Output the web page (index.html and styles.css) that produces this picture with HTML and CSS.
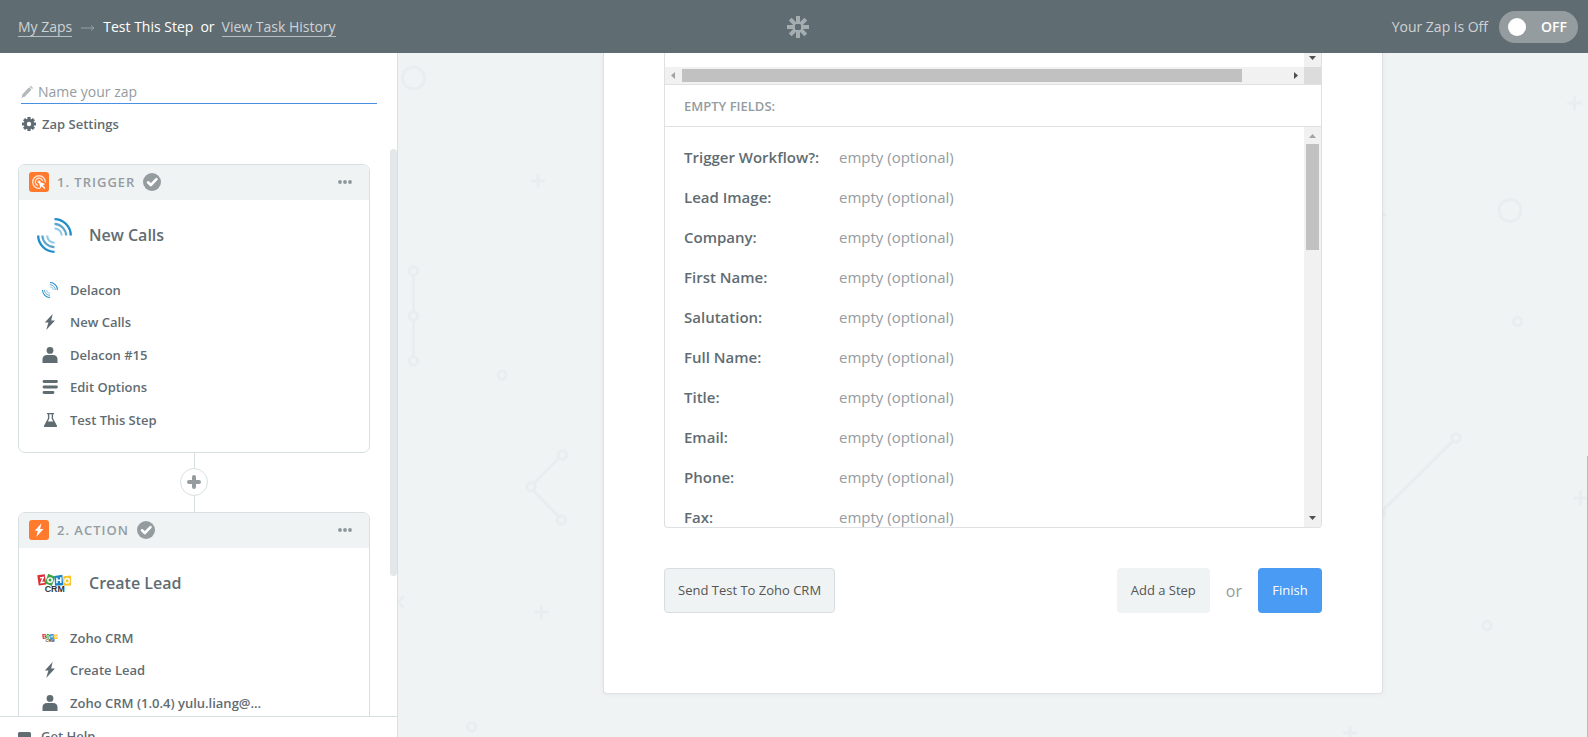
FILE: index.html
```html
<!DOCTYPE html>
<html lang="en">
<head>
<meta charset="utf-8">
<title>Test This Step</title>
<link rel="stylesheet" href="styles.css">
</head>
<body>
<svg class="defs" aria-hidden="true">
  <symbol id="bolt" viewBox="0 0 16 16"><path d="M10.6 0 2.8 8.6h3.6L4.2 16 13 6.6H9.2z" fill="currentColor"/></symbol>
  <symbol id="person" viewBox="0 0 16 16"><circle cx="8" cy="3.4" r="3.4" fill="currentColor"/><path d="M.5 16v-3.5Q.5 8 5 8h6q4.500 0 4.500 4.500V16z" fill="currentColor"/></symbol>
  <symbol id="waves" viewBox="0 0 36 36">
    <g fill="none">
      <path d="M18 1.200A17 17 0 0 1 34.800 18" stroke="#1f8ccb" stroke-width="2.400"/>
      <path d="M18 6A12.500 12.500 0 0 1 30 18" stroke="#5fa5cb" stroke-width="2.200"/>
      <path d="M18 10.800A7.500 7.500 0 0 1 25.500 18" stroke="#92cbea" stroke-width="2.200"/>
      <path d="M1.200 18A17 17 0 0 0 18 34.800" stroke="#1f8ccb" stroke-width="2.400"/>
      <path d="M5.500 18A12.500 12.500 0 0 0 18 30" stroke="#5fa5cb" stroke-width="2.200"/>
      <path d="M10.500 18A7.500 7.500 0 0 0 18 25.500" stroke="#92cbea" stroke-width="2.200"/>
    </g>
  </symbol>
  <symbol id="zoho" viewBox="0 0 36 20">
    <path d="M.3 1.600 8 .4l1.500 10.500L1.800 12z" fill="#dc2f34"/>
    <path d="m11.500 0 7.300 3-3.600 9.500-7-2.800z" fill="#3fa447"/>
    <path d="m18 2.300 8-1.300 1 10.800-8.500.4z" fill="#1c83c6"/>
    <path d="M27 2.500 35 1.800V12l-8 .4z" fill="#fbc52c"/>
    <g fill="none" stroke="#fff" stroke-width="1.500">
      <path d="m3 4.200 3.400-.5-2.200 5.500 3.600-.5"/><circle cx="13.400" cy="6.500" r="2.300"/><path d="M20.500 4v5.800m4-6.200v6m-4-3h4"/><circle cx="31" cy="7.200" r="2.300"/>
    </g>
  </symbol>
  <symbol id="check" viewBox="0 0 18 18"><circle cx="9" cy="9" r="9" fill="#959c9f"/><path d="m5 9.300 2.800 2.700L13.500 6.200" fill="none" stroke="#fff" stroke-width="2.600" stroke-linecap="round" stroke-linejoin="round"/></symbol>
  <symbol id="dots" viewBox="0 0 14 4"><g fill="#8f979b"><circle cx="2" cy="2" r="1.900"/><circle cx="7" cy="2" r="1.900"/><circle cx="12" cy="2" r="1.900"/></g></symbol>
</svg>

<header class="topbar">
  <nav class="crumbs">
    <a href="#">My Zaps</a>
    <svg class="crumb-arrow" viewBox="0 0 14 8"><path d="M0 4h13M10 1.500 13 4l-3 2.500" fill="none" stroke="#99a2a5"/></svg>
    <span class="current">Test This Step</span>
    <span class="crumb-or">or</span>
    <a href="#">View Task History</a>
  </nav>
  <svg class="logo" viewBox="-11 -11 22 22"><g stroke="#a5adb0" stroke-width="4"><path d="M0-11v8M0 3v8M-11 0h8M3 0h8M-7.800-7.800l5.300 5.300M2.500 2.500l5.300 5.300M-7.800 7.800l5.300-5.300M2.500-2.500l5.300-5.300"/></g></svg>
  <div class="status">
    <span>Your Zap is Off</span>
    <button class="toggle" type="button" role="switch" aria-checked="false"><span class="knob"></span>OFF</button>
  </div>
</header>

<div class="workspace">
  <aside class="sidebar">
    <div class="sidebar-body">
      <div class="name-field">
        <svg class="pencil" viewBox="0 0 12 12"><path d="m.5 11.800.8-3.300L8 1.200 10.500 3.500 3.800 10.800zM8.600.6l.4-.4q.6-.4 1.200 0l1.400 1.300q.5.500 0 1.100l-.5.500z" fill="#b3b9bb"/></svg>
        <input id="zap-name" type="text" aria-label="Name your zap" placeholder="Name your zap">
      </div>
      <button class="settings" type="button">
        <svg viewBox="-7 -7 14 14"><g stroke="#5f6c72" stroke-width="3.200"><path d="M0-7V7M-7 0H7M-4.900-4.900l9.800 9.800M-4.900 4.900l9.800-9.800"/></g><circle r="3.700" fill="none" stroke="#5f6c72" stroke-width="3"/><circle r="2.200" fill="#fff"/></svg>
        Zap Settings
      </button>

      <section class="step">
        <div class="step-head">
          <svg class="badge" viewBox="0 0 20 20"><rect width="20" height="20" rx="3" fill="#ff7a2d"/><g fill="none" stroke="#ffe0cd" stroke-width="1.400"><path d="M11 16.300A6.300 6.300 0 1 1 16.300 10.500"/><path d="M9 13.500A3.700 3.700 0 1 1 13.600 9"/></g><circle cx="10" cy="9.800" r="1.500" fill="#ffe0cd"/><path d="m9.600 9.400 6.600 2.500-2.400 1.300 2.600 2.700-1.100 1.100-2.600-2.700-1.200 2.300z" fill="#fff"/></svg>
          <h2>1. Trigger</h2>
          <svg class="check"><use href="#check"/></svg>
          <button class="more" type="button" aria-label="More"><svg><use href="#dots"/></svg></button>
        </div>
        <div class="step-title"><svg class="app-logo"><use href="#waves"/></svg><h3>New Calls</h3></div>
        <ul class="step-list">
          <li><svg><use href="#waves"/></svg><a href="#">Delacon</a></li>
          <li><svg><use href="#bolt"/></svg><a href="#">New Calls</a></li>
          <li><svg><use href="#person"/></svg><a href="#">Delacon #15</a></li>
          <li><svg viewBox="0 0 16 16"><path d="M2 2.500h12.500M2 8h12.500M2 13.500h9" stroke="currentColor" stroke-width="2.800" stroke-linecap="round"/></svg><a href="#">Edit Options</a></li>
          <li><svg viewBox="0 0 16 16"><path d="M5 1h7v1.200h-.9v4.300l3.900 7.300q.5 1.200-.8 1.200H2.800q-1.300 0-.8-1.200l3.900-7.300V2.200H5zm2.300 1.200v4.600L5.800 9.500h5.400L9.700 6.800V2.200z" fill="currentColor"/></svg><a href="#">Test This Step</a></li>
        </ul>
      </section>

      <div class="connector">
        <button type="button" aria-label="Add step"><svg viewBox="0 0 14 14"><path d="M7 2v10M2 7h10" stroke="#959c9f" stroke-width="4" stroke-linecap="round"/></svg></button>
      </div>

      <section class="step">
        <div class="step-head">
          <svg class="badge" viewBox="0 0 20 20"><rect width="20" height="20" rx="3" fill="#ff7a2d"/><path d="m12.500 3.300-6.800 7.500h3.100L7.300 17l7.100-8h-3.300z" fill="#fff"/></svg>
          <h2>2. Action</h2>
          <svg class="check"><use href="#check"/></svg>
          <button class="more" type="button" aria-label="More"><svg><use href="#dots"/></svg></button>
        </div>
        <div class="step-title"><svg class="app-logo" viewBox="0 0 36 20"><use href="#zoho" width="36" height="20"/><text x="8" y="19" class="zoho-text">CRM</text></svg><h3>Create Lead</h3></div>
        <ul class="step-list">
          <li><svg viewBox="0 0 36 20"><use href="#zoho" width="36" height="20"/><text x="8" y="19" class="zoho-text">CRM</text></svg><a href="#">Zoho CRM</a></li>
          <li><svg><use href="#bolt"/></svg><a href="#">Create Lead</a></li>
          <li><svg><use href="#person"/></svg><a href="#">Zoho CRM (1.0.4) yulu.liang@...</a></li>
        </ul>
      </section>
      <div class="side-thumb"></div>
    </div>
    <footer class="help">
      <svg viewBox="0 0 13 13"><path d="M1.500 0h10Q13 0 13 1.500v7q0 1.500-1.500 1.500H7l-3 3v-3H1.500Q0 10 0 8.500v-7Q0 0 1.500 0z" fill="#5f6c72"/></svg>
      <a href="#">Get Help</a>
    </footer>
  </aside>

  <main class="stage">
    <svg class="pattern" viewBox="398 53 1190 684" aria-hidden="true">
      <g fill="none" stroke="#e8edef" stroke-width="3" stroke-linecap="round">
        <circle cx="413.500" cy="78" r="11"/><circle cx="1510" cy="210.500" r="11"/>
        <path d="M538 175v12M532 181h12M541.500 606v12M535.500 612h12M1574.500 97v12M1568.500 103h12M1580.500 492v12M1574.500 498h12M1350 727v12M1344 733h12M1380 215h5"/>
        <circle cx="413.500" cy="271" r="4.200"/><circle cx="413.500" cy="316" r="4.200"/><circle cx="413.500" cy="361" r="4.200"/>
        <path d="M413.500 276v35M413.500 321v35"/>
        <circle cx="502" cy="375" r="4.200"/><circle cx="562.500" cy="455" r="4.200"/><circle cx="531" cy="487" r="4.200"/><circle cx="561.500" cy="520" r="4.200"/>
        <path d="m559 458-25 25M534 491l24 25M403 597l-5 5 5 5"/>
        <circle cx="471.500" cy="727" r="4.200"/><circle cx="1517.500" cy="321.500" r="4.200"/><circle cx="1487" cy="625.500" r="4.200"/>
        <circle cx="1456" cy="438" r="4.200"/><circle cx="1380" cy="514" r="4.200"/><path d="m1453 441-71 70"/>
      </g>
    </svg>
    <div class="card">
      <div class="panel">
        <div class="sample">
          <div class="sample-body"></div>
          <div class="scroll-y"><svg class="arrow" viewBox="0 0 7 4"><path d="M0 0h7L3.500 4z" fill="#505050"/></svg></div>
          <div class="scroll-x">
            <svg class="arrow-side" viewBox="0 0 4 7"><path d="M4 0v7L0 3.500z" fill="#a3a3a3"/></svg>
            <div class="track-x"><div class="thumb-x"></div></div>
            <svg class="arrow-side" viewBox="0 0 4 7"><path d="M0 0v7l4-3.500z" fill="#505050"/></svg>
          </div>
          <div class="corner"></div>
        </div>
        <h4 class="panel-title">Empty Fields:</h4>
        <div class="fields">
          <dl class="field-list">
            <dt>Trigger Workflow?:</dt><dd>empty (optional)</dd>
            <dt>Lead Image:</dt><dd>empty (optional)</dd>
            <dt>Company:</dt><dd>empty (optional)</dd>
            <dt>First Name:</dt><dd>empty (optional)</dd>
            <dt>Salutation:</dt><dd>empty (optional)</dd>
            <dt>Full Name:</dt><dd>empty (optional)</dd>
            <dt>Title:</dt><dd>empty (optional)</dd>
            <dt>Email:</dt><dd>empty (optional)</dd>
            <dt>Phone:</dt><dd>empty (optional)</dd>
            <dt>Fax:</dt><dd>empty (optional)</dd>
          </dl>
          <div class="scroll-y scroll-fields">
            <svg class="arrow" viewBox="0 0 7 4"><path d="M0 4h7L3.500 0z" fill="#a3a3a3"/></svg>
            <div class="thumb-y"></div>
            <svg class="arrow arrow-end" viewBox="0 0 7 4"><path d="M0 0h7L3.500 4z" fill="#505050"/></svg>
          </div>
        </div>
      </div>
      <div class="actions">
        <button class="btn btn-outline" type="button">Send Test To Zoho CRM</button>
        <button class="btn btn-plain" type="button">Add a Step</button>
        <span class="or">or</span>
        <button class="btn btn-primary" type="button">Finish</button>
      </div>
    </div>
    <div class="page-thumb"></div>
  </main>
</div>
</body>
</html>
```
FILE: styles.css
```css
* { box-sizing: border-box; }
body {
  margin: 0;
  height: 100vh;
  display: flex;
  flex-direction: column;
  overflow: hidden;
  font: 400 14px/20px "Open Sans", "Noto Sans", sans-serif;
  color: #5f6c72;
}
button { font: inherit; color: inherit; border: 0; padding: 0; background: none; cursor: pointer; }
a { color: inherit; text-decoration: none; }
h2, h3, h4, ul, dl, dd { margin: 0; padding: 0; }
svg { display: block; flex: none; }
.defs { position: absolute; width: 0; height: 0; }
.zoho-text { font: 700 9px "Liberation Sans", sans-serif; fill: #333; }

/* Top bar */
.topbar {
  flex: none;
  height: 53px;
  padding: 0 10px 0 18px;
  display: grid;
  grid-template-columns: 1fr auto 1fr;
  align-items: center;
  background: #5f6c72;
}
.crumbs { display: flex; align-items: center; }
.crumbs a { margin-top: 1px; color: #cfd3d5; border-bottom: 1px solid #b7bdc0; line-height: 18px; }
.crumb-arrow { width: 14px; height: 8px; margin: 2px 8px 0 9px; }
.current, .crumb-or { color: #fff; }
.crumb-or { margin: 0 7px; }
.logo { width: 22px; height: 22px; }
.status { display: flex; justify-content: flex-end; align-items: center; gap: 11px; color: #cfd3d5; }
.toggle {
  display: flex;
  align-items: center;
  justify-content: space-between;
  width: 79px;
  height: 32px;
  padding: 0 11px 0 9px;
  border-radius: 16px;
  background: #959c9f;
  color: #fff;
  font-weight: 600;
}
.knob { width: 18px; height: 18px; border-radius: 50%; background: #fff; }

.workspace { flex: 1; min-height: 0; display: grid; grid-template-columns: 398px 1fr; }

/* Sidebar */
.sidebar {
  min-height: 0;
  display: flex;
  flex-direction: column;
  border-right: 1px solid #dcdfe1;
  background: #fff;
  font-size: 13px;
  font-weight: 600;
}
.sidebar-body { position: relative; flex: 1; min-height: 0; overflow: hidden; padding: 27px 27px 0 18px; }
.name-field {
  display: flex;
  align-items: center;
  gap: 5px;
  height: 24px;
  margin: 0 -7px 0 3px;
  border-bottom: 1px solid #4a90e2;
}
.pencil { width: 12px; height: 12px; }
.name-field input {
  flex: 1;
  min-width: 0;
  padding: 0;
  border: 0;
  outline: 0;
  background: none;
  font: 400 14px/20px "Open Sans", "Noto Sans", sans-serif;
  color: #5f6c72;
}
.name-field input::placeholder { color: #959c9f; opacity: 1; }
.settings { display: flex; align-items: center; gap: 6px; margin: 10px 0 30px 4px; }
.settings svg { width: 14px; height: 14px; }
.step { border: 1px solid #d8dfe1; border-radius: 7px; overflow: hidden; padding-bottom: 16px; }
.step-head { display: flex; align-items: center; height: 35px; padding: 0 15px 1px 10px; background: #eff3f4; }
.badge { width: 20px; height: 20px; }
.step-head h2 {
  margin-left: 8px;
  font-size: 13px;
  font-weight: 600;
  letter-spacing: 1px;
  text-transform: uppercase;
  color: #959c9f;
}
.check { width: 18px; height: 18px; margin-left: 8px; }
.more { margin-left: auto; padding: 8px 2px; }
.more svg { width: 14px; height: 4px; }
.step-title { display: flex; align-items: center; gap: 17px; height: 70px; padding-left: 18px; }
.step-title h3 { font-size: 16px; font-weight: 600; }
.app-logo { width: 35px; height: 35px; }
.step-list { list-style: none; padding: 4px 0 0 23px; }
.step-list li { display: flex; align-items: center; gap: 12px; height: 32px; }
.step-list li:nth-child(even) { height: 33px; padding-bottom: 1px; }
.step-list svg { width: 16px; height: 16px; }
.connector {
  display: flex;
  justify-content: center;
  padding: 15px 0 16px;
  background: linear-gradient(#d8dfe1, #d8dfe1) center / 1px 100% no-repeat;
}
.connector button {
  display: grid;
  place-items: center;
  width: 28px;
  height: 28px;
  border: 1px solid #d8dfe1;
  border-radius: 50%;
  background: #fff;
}
.connector svg { width: 14px; height: 14px; }
.side-thumb { position: absolute; right: 0; top: 96px; width: 7px; height: 427px; border-radius: 4px; background: #e3e7e9; }
.help {
  flex: none;
  display: flex;
  align-items: flex-start;
  gap: 10px;
  height: 21px;
  padding: 9px 18px 0;
  border-top: 1px solid #d8dfe1;
  overflow: hidden;
}
.help svg { width: 13px; height: 13px; margin-top: 6px; }

/* Stage */
.stage { position: relative; min-height: 0; overflow: hidden; padding: 0 24px; background: #eff3f4; }
.pattern { position: absolute; top: 0; left: 0; width: 1190px; height: 684px; }
.page-thumb { position: absolute; right: 0; top: 403px; bottom: 0; width: 1px; background: #b6bcbe; }
.card {
  position: relative;
  max-width: 780px;
  margin: 0 auto;
  padding: 0 60px 80px;
  border: 1px solid #dde1e4;
  border-top: 0;
  border-radius: 0 0 4px 4px;
  background: #fff;
  box-shadow: 0 0 5px rgba(95, 108, 114, 0.08);
}
.panel { border: 1px solid #dde1e4; border-top: 0; border-radius: 0 0 4px 4px; overflow: hidden; }
.sample { display: grid; grid-template: 14px 17px / 1fr 17px; border-bottom: 1px solid #dde1e4; }
.scroll-y { display: flex; flex-direction: column; align-items: center; background: #f1f1f1; }
.arrow { width: 7px; height: 4px; margin-top: 3px; }
.scroll-x { display: flex; align-items: center; padding: 0 6px; gap: 7px; background: #f1f1f1; }
.arrow-side { width: 4px; height: 7px; }
.track-x { flex: 1; }
.thumb-x { width: 92.5%; height: 13px; background: #c1c1c1; }
.corner { background: #dcdcdc; }
.panel-title {
  padding: 11px 19px 10px;
  border-bottom: 1px solid #dde1e4;
  font-size: 13px;
  font-weight: 600;
  text-transform: uppercase;
  color: #959c9f;
}
.fields { display: grid; grid-template: 400px / 1fr 17px; overflow: hidden; }
.field-list {
  display: grid;
  grid-template-columns: 155px 1fr;
  grid-auto-rows: 40px;
  align-content: start;
  align-items: center;
  padding: 10px 19px 0;
  font-size: 15px;
}
.field-list dt { font-weight: 600; }
.field-list dd { color: #959c9f; }
.scroll-fields .arrow { margin-top: 7px; }
.scroll-fields .thumb-y { width: 13px; height: 106px; margin-top: 6px; background: #c1c1c1; }
.scroll-fields .arrow-end { margin: auto 0 7px; }
.actions { display: flex; align-items: center; margin-top: 40px; }
.btn { height: 45px; padding: 0 14px 1px; border-radius: 4px; font-size: 13px; color: #555; }
.btn-outline { padding: 0 13px 1px; margin-right: auto; border: 1px solid #d8dde0; background: #eff3f4; }
.btn-plain { background: #eff3f4; }
.btn-primary { min-width: 64px; background: #499bf3; color: #fff; }
.or { margin: 0 16px; font-size: 16px; color: #959c9f; }
```
